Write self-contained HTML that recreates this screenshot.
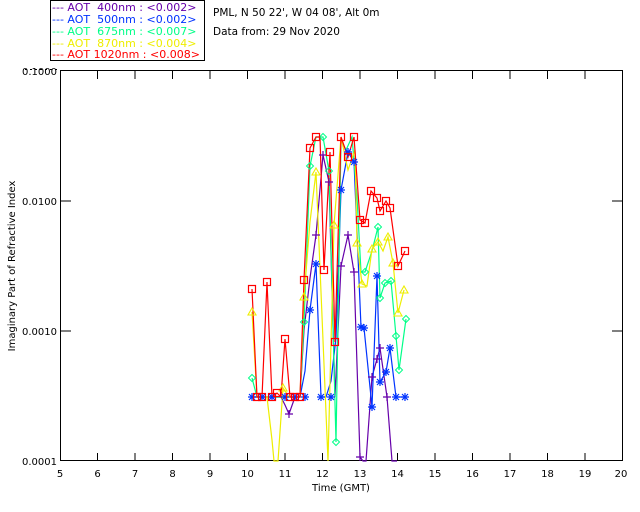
<!DOCTYPE html>
<html><head><meta charset="utf-8"><style>
body{margin:0;background:#fff;width:640px;height:512px;overflow:hidden}
svg{display:block;font-family:"DejaVu Sans","Liberation Sans",sans-serif}
.lg text{white-space:pre}
</style></head><body>
<svg width="640" height="512" viewBox="0 0 640 512" xmlns="http://www.w3.org/2000/svg">
<defs>
<g id="sq"><rect x="-3.5" y="-3.5" width="7" height="7" fill="none" stroke="#f00" stroke-width="1.2"/></g>
<g id="st"><path d="M-4 0H4M0-4V4M-3-3L3 3M-3 3L3-3" stroke="#03f" stroke-width="1.2"/></g>
<g id="pl"><path d="M-4 0H4M0-4V4" stroke="#60a" stroke-width="1.2"/></g>
<g id="di"><path d="M0-3.5L3.5 0L0 3.5L-3.5 0Z" fill="none" stroke="#0f8" stroke-width="1"/></g>
<g id="tr"><path d="M0-4L4 3H-4Z" fill="none" stroke="#ee0" stroke-width="1.1"/></g>
</defs>
<!-- legend -->
<rect x="50.5" y="0.5" width="154" height="60" fill="none" stroke="#000"/>
<g font-size="11" class="lg">
<text x="52" y="11" fill="#60a" xml:space="preserve">--- AOT  400nm : &lt;0.002&gt;</text>
<text x="52" y="23" fill="#03f" xml:space="preserve">--- AOT  500nm : &lt;0.002&gt;</text>
<text x="52" y="35" fill="#0f8" xml:space="preserve">--- AOT  675nm : &lt;0.007&gt;</text>
<text x="52" y="47" fill="#ee0" xml:space="preserve">--- AOT  870nm : &lt;0.004&gt;</text>
<text x="52" y="58" fill="#f00" xml:space="preserve">--- AOT 1020nm : &lt;0.008&gt;</text>
</g>
<g font-size="10.5">
<text x="213" y="16" fill="#000">PML, N 50 22', W 04 08', Alt 0m</text>
<text x="213" y="35" fill="#000">Data from: 29 Nov 2020</text>
</g>
<path d="M25 69.5h2M30 69.5h2M35 69.5h2M40 69.5h2M45 69.5h2M50 69.5h2M55 69.5h2" stroke="#000"/>
<!-- axes -->
<rect x="60.5" y="70.5" width="562" height="390" fill="none" stroke="#000"/>
<g stroke="#000">
<path d="M97.5 461v-8M135 461v-8M172.5 461v-8M210 461v-8M247.5 461v-8M285 461v-8M322.5 461v-8M360 461v-8M397.5 461v-8M435 461v-8M472.5 461v-8M510 461v-8M547.5 461v-8M585 461v-8"/>
<path d="M97.5 71v8M135 71v8M172.5 71v8M210 71v8M247.5 71v8M285 71v8M322.5 71v8M360 71v8M397.5 71v8M435 71v8M472.5 71v8M510 71v8M547.5 71v8M585 71v8"/>
<path d="M61 201h10M61 331h10M622 201h-10M622 331h-10"/>
</g>
<g font-size="10" fill="#000" text-anchor="middle">
<text x="60" y="477">5</text><text x="97.5" y="477">6</text><text x="135" y="477">7</text><text x="172.5" y="477">8</text><text x="210" y="477">9</text><text x="247.5" y="477">10</text><text x="285" y="477">11</text><text x="322.5" y="477">12</text><text x="360" y="477">13</text><text x="397.5" y="477">14</text><text x="435" y="477">15</text><text x="472.5" y="477">16</text><text x="510" y="477">17</text><text x="547.5" y="477">18</text><text x="585" y="477">19</text><text x="621" y="477">20</text>
<text x="341" y="491">Time (GMT)</text>
</g>
<g font-size="10" fill="#000" text-anchor="end">
<text x="57" y="75">0.1000</text><text x="57" y="205">0.0100</text><text x="57" y="335">0.0010</text><text x="57" y="465">0.0001</text>
</g>
<text transform="translate(15,266) rotate(-90)" font-size="10" text-anchor="middle">Imaginary Part of Refractive Index</text>
<!-- data -->
<g fill="none" stroke-width="1.2">
<polyline stroke="#60a" points="252,397 257,397 262,397 267,397 272,397 277,397 281,397 285,405 289,414 295,397 300,397 304,330 310,278 316,235 323,155 329,182 335,397 341,266 348,235 354,272 360,457 363,461 366,461 372,377 377,359 380,348 387,397 392,461 397,461"/>
<polyline stroke="#03f" points="252,397 257,397 262,397 267,397 272,397 277,397 281,397 285,397 290,397 295,397 300,397 305,371 310,310 316,264 321,397 326,397 331,381 336,338 341,190 348,152 354,162 361,327 364,328 372,407 377,276 380,382 386,372 390,348 396,397 400,397 405,397"/>
<polyline stroke="#0f8" points="252,378 257,397 262,397 267,397 272,397 277,397 281,397 285,397 290,397 295,397 300,397 304,322 310,166 316,137 323,137 329,171 336,442 341,140 346,150 352,137 357,197 361,272 365,272 372,251 378,227 380,298 385,283 391,281 396,336 399,370 406,319"/>
<polyline stroke="#ee0" points="252,312 257,397 262,397 267,397 272,440 274,461 278,461 283,388 289,397 295,397 300,397 304,297 310,222 316,172 322,316 328,461 334,225 341,137 348,170 355,150 357,243 362,284 367,286 372,249 378,242 383,251 388,237 393,263 398,313 404,290"/>
<polyline stroke="#f00" points="252,289 257,397 262,397 267,282 272,397 277,393 281,397 285,339 290,397 295,397 300,397 304,280 310,148 316,137 320,137 324,270 330,152 335,342 341,137 348,157 354,137 360,220 365,223 371,191 377,198 380,211 386,201 390,208 398,266 405,251"/>
</g>
<g>
<use href="#pl" x="289" y="414"/><use href="#pl" x="316" y="235"/><use href="#pl" x="323" y="155"/><use href="#pl" x="329" y="182"/><use href="#pl" x="341" y="266"/><use href="#pl" x="348" y="235"/><use href="#pl" x="354" y="272"/><use href="#pl" x="360" y="457"/><use href="#pl" x="372" y="377"/><use href="#pl" x="377" y="359"/><use href="#pl" x="380" y="348"/><use href="#pl" x="387" y="397"/>
<use href="#st" x="252" y="397"/><use href="#st" x="262" y="397"/><use href="#st" x="272" y="397"/><use href="#st" x="285" y="397"/><use href="#st" x="295" y="397"/><use href="#st" x="305" y="397"/><use href="#st" x="310" y="310"/><use href="#st" x="316" y="264"/><use href="#st" x="321" y="397"/><use href="#st" x="331" y="397"/><use href="#st" x="341" y="190"/><use href="#st" x="348" y="152"/><use href="#st" x="354" y="162"/><use href="#st" x="361" y="327"/><use href="#st" x="364" y="328"/><use href="#st" x="372" y="407"/><use href="#st" x="377" y="276"/><use href="#st" x="380" y="382"/><use href="#st" x="386" y="372"/><use href="#st" x="390" y="348"/><use href="#st" x="396" y="397"/><use href="#st" x="405" y="397"/>
<use href="#di" x="252" y="378"/><use href="#di" x="304" y="322"/><use href="#di" x="310" y="166"/><use href="#di" x="323" y="137"/><use href="#di" x="329" y="171"/><use href="#di" x="336" y="442"/><use href="#di" x="365" y="272"/><use href="#di" x="378" y="227"/><use href="#di" x="380" y="298"/><use href="#di" x="385" y="283"/><use href="#di" x="391" y="281"/><use href="#di" x="396" y="336"/><use href="#di" x="399" y="370"/><use href="#di" x="406" y="319"/>
<use href="#tr" x="252" y="312"/><use href="#tr" x="283" y="388"/><use href="#tr" x="304" y="297"/><use href="#tr" x="316" y="172"/><use href="#tr" x="334" y="225"/><use href="#tr" x="357" y="243"/><use href="#tr" x="362" y="284"/><use href="#tr" x="372" y="249"/><use href="#tr" x="378" y="242"/><use href="#tr" x="388" y="237"/><use href="#tr" x="393" y="263"/><use href="#tr" x="398" y="313"/><use href="#tr" x="404" y="290"/>
<use href="#sq" x="252" y="289"/><use href="#sq" x="257" y="397"/><use href="#sq" x="262" y="397"/><use href="#sq" x="267" y="282"/><use href="#sq" x="272" y="397"/><use href="#sq" x="277" y="393"/><use href="#sq" x="285" y="339"/><use href="#sq" x="290" y="397"/><use href="#sq" x="295" y="397"/><use href="#sq" x="300" y="397"/><use href="#sq" x="304" y="280"/><use href="#sq" x="310" y="148"/><use href="#sq" x="316" y="137"/><use href="#sq" x="324" y="270"/><use href="#sq" x="330" y="152"/><use href="#sq" x="335" y="342"/><use href="#sq" x="341" y="137"/><use href="#sq" x="348" y="157"/><use href="#sq" x="354" y="137"/><use href="#sq" x="360" y="220"/><use href="#sq" x="365" y="223"/><use href="#sq" x="371" y="191"/><use href="#sq" x="377" y="198"/><use href="#sq" x="380" y="211"/><use href="#sq" x="386" y="201"/><use href="#sq" x="390" y="208"/><use href="#sq" x="398" y="266"/><use href="#sq" x="405" y="251"/>
</g>
</svg>
</body></html>
